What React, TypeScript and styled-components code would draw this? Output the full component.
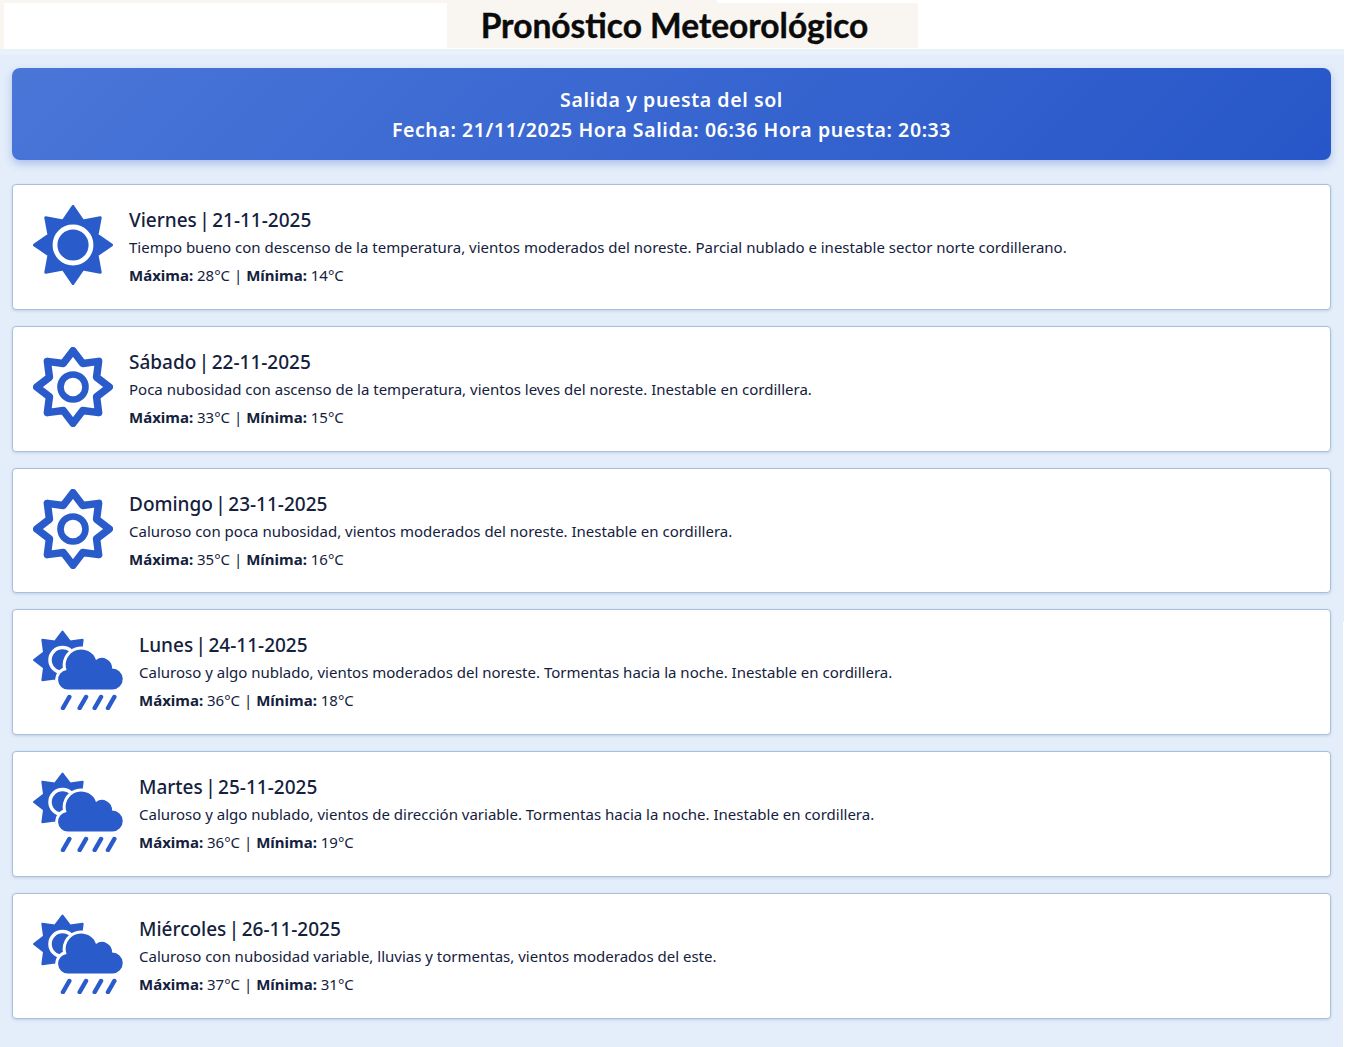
import React from 'react';
import styled, { createGlobalStyle } from 'styled-components';

const GlobalStyle = createGlobalStyle`
	html, body {
		margin: 0;
		padding: 0;
		background: #ffffff;
	}
	* {
		box-sizing: border-box;
	}
`;

type IconKind = 'solid' | 'outline' | 'storm';

const days: {
	title: string;
	text: string;
	max: string;
	min: string;
	icon: IconKind;
}[] = [
	{
		title: 'Viernes | 21-11-2025',
		text: 'Tiempo bueno con descenso de la temperatura, vientos moderados del noreste. Parcial nublado e inestable sector norte cordillerano.',
		max: '28°C',
		min: '14°C',
		icon: 'solid',
	},
	{
		title: 'Sábado | 22-11-2025',
		text: 'Poca nubosidad con ascenso de la temperatura, vientos leves del noreste. Inestable en cordillera.',
		max: '33°C',
		min: '15°C',
		icon: 'outline',
	},
	{
		title: 'Domingo | 23-11-2025',
		text: 'Caluroso con poca nubosidad, vientos moderados del noreste. Inestable en cordillera.',
		max: '35°C',
		min: '16°C',
		icon: 'outline',
	},
	{
		title: 'Lunes | 24-11-2025',
		text: 'Caluroso y algo nublado, vientos moderados del noreste. Tormentas hacia la noche. Inestable en cordillera.',
		max: '36°C',
		min: '18°C',
		icon: 'storm',
	},
	{
		title: 'Martes | 25-11-2025',
		text: 'Caluroso y algo nublado, vientos de dirección variable. Tormentas hacia la noche. Inestable en cordillera.',
		max: '36°C',
		min: '19°C',
		icon: 'storm',
	},
	{
		title: 'Miércoles | 26-11-2025',
		text: 'Caluroso con nubosidad variable, lluvias y tormentas, vientos moderados del este.',
		max: '37°C',
		min: '31°C',
		icon: 'storm',
	},
];

// eight pointed star around a centre
const starPoints = (cx: number, cy: number, outer: number, inner: number) => {
	const pts: string[] = [];
	for (let i = 0; i < 16; i++) {
		const r = i % 2 === 0 ? outer : inner;
		const a = (i * Math.PI) / 8 - Math.PI / 2;
		pts.push(`${(cx + r * Math.cos(a)).toFixed(2)},${(cy + r * Math.sin(a)).toFixed(2)}`);
	}
	return pts.join(' ');
};

const SolidSun = () => (
	<SunSvg viewBox="0 0 80 80">
		<polygon
			points={starPoints(40, 40, 38.5, 26)}
			fill="#2a5bcb"
			stroke="#2a5bcb"
			strokeWidth="3"
			strokeLinejoin="round"
		/>
		<circle cx="40" cy="40" r="18" fill="#2a5bcb" stroke="#fff" strokeWidth="4.8" />
	</SunSvg>
);

const OutlineSun = () => (
	<SunSvg viewBox="0 0 80 80">
		<polygon
			points={starPoints(40, 40, 36.25, 25.5)}
			fill="#fff"
			stroke="#2a5bcb"
			strokeWidth="7.5"
			strokeLinejoin="round"
		/>
		<circle cx="40" cy="40" r="12.5" fill="#fff" stroke="#2a5bcb" strokeWidth="6.6" />
	</SunSvg>
);

const StormIcon = () => (
	<StormSvg viewBox="0 0 90 80">
		<polygon
			points={starPoints(29.5, 30, 28.5, 20)}
			fill="#2a5bcb"
			stroke="#2a5bcb"
			strokeWidth="2"
			strokeLinejoin="round"
		/>
		<circle cx="29.5" cy="30" r="12.5" fill="#2a5bcb" stroke="#fff" strokeWidth="3.5" />
		<path
			d="M35 59.5A9.800 9.800 0 0 1 33.500 40A15.500 15.500 0 0 1 63 30A10 10 0 0 1 79 38.500A10.500 10.500 0 0 1 79.500 59.500Z"
			fill="#2a5bcb"
			stroke="#fff"
			strokeWidth="6"
			paintOrder="stroke"
		/>
		<g stroke="#2a5bcb" strokeWidth="4.500" strokeLinecap="round">
			<line x1="36.300" y1="67" x2="30" y2="78" />
			<line x1="53" y1="67" x2="46.700" y2="78" />
			<line x1="68" y1="67" x2="61.700" y2="78" />
			<line x1="81.300" y1="67" x2="75" y2="78" />
		</g>
	</StormSvg>
);

const icons: Record<IconKind, React.ReactNode> = {
	solid: <SolidSun />,
	outline: <OutlineSun />,
	storm: <StormIcon />,
};

export default function App() {
	return (
		<>
			<GlobalStyle />
			<TopBar>
				<TopStrip />
				<TitleRow>
					<TitleBox>
						<Title>Pronóstico Meteorológico</Title>
					</TitleBox>
				</TitleRow>
			</TopBar>
			<Page>
				<SunBanner>
					<div>Salida y puesta del sol</div>
					<div>Fecha: 21/11/2025 Hora Salida: 06:36 Hora puesta: 20:33</div>
				</SunBanner>
				<CardList>
					{days.map((day) => (
						<Card key={day.title}>
							{icons[day.icon]}
							<CardBody>
								<DayTitle>{day.title}</DayTitle>
								<DayText>{day.text}</DayText>
								<Temps>
									<b>Máxima:</b> {day.max} | <b>Mínima:</b> {day.min}
								</Temps>
							</CardBody>
						</Card>
					))}
				</CardList>
			</Page>
		</>
	);
}

const TopBar = styled.header`
	display: flex;
	flex-direction: column;
	height: 49px;
	background: #ffffff;
`;
const TopStrip = styled.div`
	width: 717px;
	height: 3px;
	background-color: #f9f6f1;
`;
const TitleRow = styled.div`
	display: flex;
	height: 46px;
	padding-left: 447px;
	box-shadow: inset 4px 0 0 #f9f6f1;
`;
const TitleBox = styled.div`
	display: flex;
	justify-content: center;
	align-items: center;
	width: 471px;
	height: 45px;
	padding: 0 16px 0 0;
	background-color: #f9f6f1;
`;
const Title = styled.h1`
	margin: 0;
	font-family: 'Lato', 'Noto Sans', sans-serif;
	font-size: 33.5px;
	line-height: 43px;
	font-weight: 700;
	color: #0b0b0b;
	white-space: nowrap;
	-webkit-text-stroke: 0.4px #0b0b0b;
`;
const Page = styled.main`
	display: flex;
	flex-direction: column;
	gap: 24px;
	width: 100%;
	height: 998px;
	padding: 19px 14px 0 12px;
	background:
		linear-gradient(#e9f1fb, #e9f1fb) left top / 1344px 6px no-repeat,
		linear-gradient(#e4eefa, #e4eefa) left top / 1343px 100% no-repeat,
		linear-gradient(#e4eefa, #e4eefa) left top / 1344px 573px no-repeat;
	font-family: 'Noto Sans', 'Open Sans', sans-serif;
`;
const SunBanner = styled.section`
	display: flex;
	flex-direction: column;
	justify-content: center;
	align-items: center;
	height: 92px;
	padding-top: 2px;
	border-radius: 8px;
	background: linear-gradient(135deg, #4a76d8, #2756c8);
	box-shadow: 0 4px 8px rgba(42, 91, 203, 0.3);
	color: #ffffff;
	font-size: 19.5px;
	line-height: 30px;
	font-weight: 600;
	letter-spacing: 0.6px;
`;
const CardList = styled.div`
	display: flex;
	flex-direction: column;
	gap: 16px;
`;
const Card = styled.article`
	display: flex;
	align-items: center;
	gap: 16px;
	height: 125.82px;
	padding: 0 16px 0 20px;
	border: 1px solid #aabfdc;
	border-radius: 4px;
	background-color: #ffffff;
	box-shadow: 0 1px 3px rgba(60, 90, 150, 0.2);
`;
const SunSvg = styled.svg`
	flex: none;
	width: 80px;
	height: 80px;
	margin-bottom: 4px;
`;
const StormSvg = styled.svg`
	flex: none;
	width: 90px;
	height: 80px;
	margin-bottom: 4px;
`;
const CardBody = styled.div`
	display: flex;
	flex-direction: column;
	color: #14213d;
`;
const DayTitle = styled.h3`
	margin: 0 0 2px 0;
	font-size: 19px;
	line-height: 26px;
	font-weight: 500;
	word-spacing: -2.5px;
`;
const DayText = styled.p`
	margin: 0 0 4px 0;
	font-size: 15px;
	line-height: 24px;
`;
const Temps = styled.p`
	margin: 0;
	font-size: 15px;
	line-height: 24px;
`;
